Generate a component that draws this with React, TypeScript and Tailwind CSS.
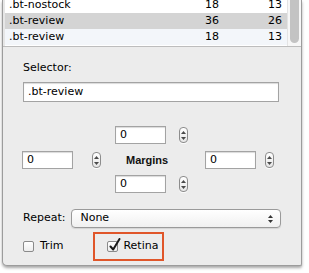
import React from "react";

const font = { fontFamily: '"DejaVu Sans", "Liberation Sans", sans-serif' };

function Stepper() {
  return (
    <div className="w-[9px] h-[16px] rounded-[4px] border border-[#8d8d8d] bg-gradient-to-b from-white to-[#e6e6e6] flex flex-col items-center justify-center gap-[3px] shadow-[0_1px_0_rgba(255,255,255,0.8)]">
      <svg width="5" height="3" viewBox="0 0 5 3"><path d="M2.5 0 L5 3 L0 3 Z" fill="#4a4a4a" /></svg>
      <svg width="5" height="3" viewBox="0 0 5 3"><path d="M0 0 L5 0 L2.5 3 Z" fill="#4a4a4a" /></svg>
    </div>
  );
}

function NumInput() {
  return (
    <div className="w-[51px] h-[18px] bg-white border border-[#a3a3a3] shadow-[inset_0_1px_1px_rgba(0,0,0,0.15)] flex items-center pl-[4px] text-[11px] text-black">
      0
    </div>
  );
}

function Row({ name, a, b, bg }: { name: string; a: string; b: string; bg: string }) {
  return (
    <div className={`h-[16px] flex items-center text-[11px] text-black ${bg}`}>
      <div className="pl-[4px] flex-1">{name}</div>
      <div className="w-[16px] text-right">{a}</div>
      <div className="w-[63px] text-right">{b}</div>
      <div className="w-[5px]" />
    </div>
  );
}

export default function App() {
  return (
    <div className="w-[309px] h-[273px] bg-white overflow-hidden" style={font}>
      <div className="ml-[2px] w-[300px] h-[266px] border-l border-r border-b border-[#9c9c9c] rounded-bl-[5px] rounded-br-[2px] bg-[#ececec] shadow-[0_2px_3px_rgba(0,0,0,0.35)] flex flex-col">
        {/* table */}
        <div className="h-[47px] flex bg-white border-b border-[#bdbdbd]">
          <div className="w-[2px] bg-[#e6e6e6]" />
          <div className="flex-1 overflow-hidden">
            <div className="-mt-[3px]">
              <Row name=".bt-nostock" a="18" b="13" bg="bg-white" />
              <Row name=".bt-review" a="36" b="26" bg="bg-[#d4d4d4]" />
              <Row name=".bt-review" a="18" b="13" bg="bg-[#f3f6fa]" />
            </div>
          </div>
          <div className="w-[14px] bg-[#f7f7f7] border-l border-[#e4e4e4] flex justify-center">
            <div className="w-[9px] h-[43px] rounded-b-[5px] bg-[#c3c3c3]" />
          </div>
        </div>

        {/* selector */}
        <div className="pl-[20px] pt-[14px] text-[11px] text-black leading-[13px]">Selector:</div>
        <div className="ml-[20px] mt-[8px] w-[256px] h-[20px] bg-white border border-[#a3a3a3] shadow-[inset_0_1px_1px_rgba(0,0,0,0.15)] flex items-center pl-[4px] text-[11px] text-black">
          .bt-review
        </div>

        {/* margins */}
        <div className="mt-[24px] flex items-center">
          <div className="ml-[112px]"><NumInput /></div>
          <div className="ml-[13px]"><Stepper /></div>
        </div>
        <div className="mt-[7px] flex items-center">
          <div className="ml-[19px]"><NumInput /></div>
          <div className="ml-[19px]"><Stepper /></div>
          <div
            className="ml-[25px] text-[11px] font-bold text-[#111] w-[80px]"
            style={{ fontFamily: '"Liberation Sans", Arial, sans-serif' }}
          >
            Margins
          </div>
          <div className="-ml-[1px]"><NumInput /></div>
          <div className="ml-[9px]"><Stepper /></div>
        </div>
        <div className="mt-[6px] flex items-center">
          <div className="ml-[112px]"><NumInput /></div>
          <div className="ml-[13px]"><Stepper /></div>
        </div>

        {/* repeat */}
        <div className="mt-[16px] flex items-center">
          <div className="ml-[20px] text-[11px] text-black">Repeat:</div>
          <div className="ml-[6px] w-[210px] h-[19px] rounded-[4px] border border-[#9a9a9a] bg-gradient-to-b from-white to-[#f0f0f0] flex items-center pl-[8px] pr-[7px] text-[11px] text-black shadow-[0_1px_1px_rgba(0,0,0,0.1)]">
            <span className="flex-1">None</span>
            <div className="flex flex-col items-center gap-[2px]">
              <svg width="5" height="3" viewBox="0 0 5 3"><path d="M2.5 0 L5 3 L0 3 Z" fill="#333" /></svg>
              <svg width="5" height="3" viewBox="0 0 5 3"><path d="M0 0 L5 0 L2.5 3 Z" fill="#333" /></svg>
            </div>
          </div>
        </div>

        {/* checkboxes */}
        <div className="mt-[4px] flex items-center">
          <div className="ml-[20px] w-[11px] h-[11px] rounded-[2px] border border-[#8a8a8a] bg-gradient-to-b from-white to-[#ededed]" />
          <div className="ml-[6px] text-[11px] text-black">Trim</div>
          <div className="ml-[30px] w-[71px] h-[29px] border-2 border-[#e0562a] flex items-center">
            <div className="ml-[12px] relative w-[11px] h-[11px] rounded-[2px] border border-[#8a8a8a] bg-gradient-to-b from-white to-[#ededed]">
              <svg className="absolute -top-[4px] left-[1px]" width="12" height="14" viewBox="0 0 12 14">
                <path d="M1.5 8.5 L4.2 11.5 L10.5 1" fill="none" stroke="#1a1a1a" strokeWidth="2" strokeLinecap="round" strokeLinejoin="round" />
              </svg>
            </div>
            <div className="ml-[5px] text-[11px] text-black">Retina</div>
          </div>
        </div>
      </div>
    </div>
  );
}
